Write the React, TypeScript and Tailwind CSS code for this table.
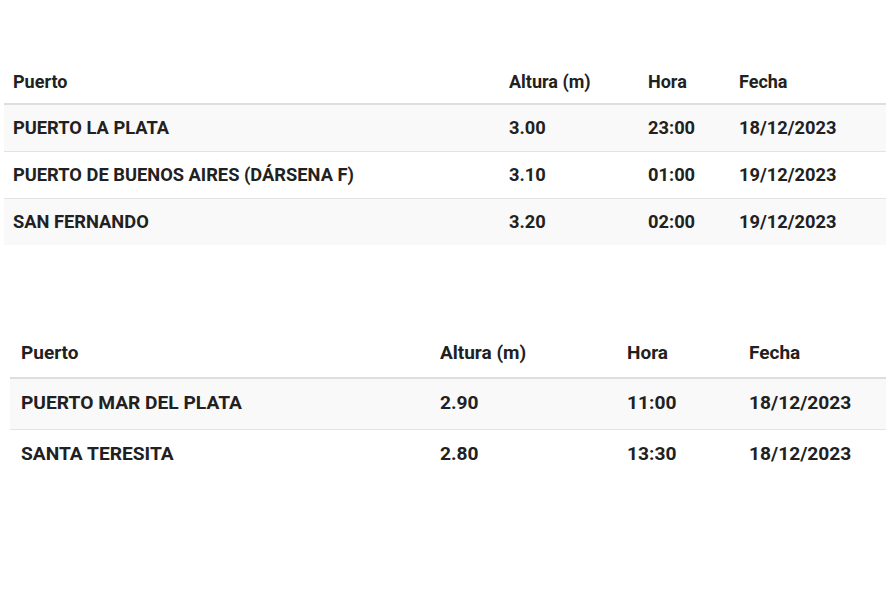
type Row = { puerto: string; altura: string; hora: string; fecha: string };

const rio: Row[] = [
  { puerto: "PUERTO LA PLATA", altura: "3.00", hora: "23:00", fecha: "18/12/2023" },
  { puerto: "PUERTO DE BUENOS AIRES (DÁRSENA F)", altura: "3.10", hora: "01:00", fecha: "19/12/2023" },
  { puerto: "SAN FERNANDO", altura: "3.20", hora: "02:00", fecha: "19/12/2023" },
];

const costa: Row[] = [
  { puerto: "PUERTO MAR DEL PLATA", altura: "2.90", hora: "11:00", fecha: "18/12/2023" },
  { puerto: "SANTA TERESITA", altura: "2.80", hora: "13:30", fecha: "18/12/2023" },
];

export default function App() {
  return (
    <div className="min-h-[592px] w-[887px] bg-white pt-[59px] text-[#212121] [font-family:Roboto,'Liberation_Sans',sans-serif]">
      {/* Río de la Plata */}
      <table className="ml-[4px] w-[882px] table-fixed border-collapse text-[18px] font-bold">
        <colgroup>
          <col className="w-[496px]" />
          <col className="w-[139px]" />
          <col className="w-[91px]" />
          <col className="w-[156px]" />
        </colgroup>
        <thead>
          <tr className="h-[45px] border-b-2 border-[#dedede] text-left">
            <th className="px-[9px] font-bold">Puerto</th>
            <th className="px-[9px] font-bold">Altura (m)</th>
            <th className="px-[9px] font-bold">Hora</th>
            <th className="px-[9px] font-bold">Fecha</th>
          </tr>
        </thead>
        <tbody className="text-[18.3px]">
          {rio.map((r, i) => (
            <tr
              key={r.puerto}
              className={`h-[47px] ${i > 0 ? "border-t border-[#e3e3e3]" : ""} ${i % 2 === 0 ? "bg-[#f9f9f9]" : "bg-white"}`}
            >
              <td className="px-[9px]">{r.puerto}</td>
              <td className="px-[9px]">{r.altura}</td>
              <td className="px-[9px]">{r.hora}</td>
              <td className="px-[9px]">{r.fecha}</td>
            </tr>
          ))}
        </tbody>
      </table>

      {/* Costa atlántica */}
      <table className="ml-[10px] mt-[84px] w-[876px] table-fixed border-collapse text-[19px] font-bold">
        <colgroup>
          <col className="w-[419px]" />
          <col className="w-[187px]" />
          <col className="w-[122px]" />
          <col className="w-[148px]" />
        </colgroup>
        <thead>
          <tr className="h-[49px] border-b-2 border-[#dedede] text-left">
            <th className="px-[11px] font-bold">Puerto</th>
            <th className="px-[11px] font-bold">Altura (m)</th>
            <th className="px-[11px] font-bold">Hora</th>
            <th className="px-[11px] font-bold">Fecha</th>
          </tr>
        </thead>
        <tbody className="text-[19.2px]">
          {costa.map((r, i) => (
            <tr
              key={r.puerto}
              className={`h-[51px] ${i > 0 ? "border-t border-[#e3e3e3]" : ""} ${i % 2 === 0 ? "bg-[#f9f9f9]" : "bg-white"}`}
            >
              <td className="px-[11px]">{r.puerto}</td>
              <td className="px-[11px]">{r.altura}</td>
              <td className="px-[11px]">{r.hora}</td>
              <td className="px-[11px]">{r.fecha}</td>
            </tr>
          ))}
        </tbody>
      </table>
    </div>
  );
}
